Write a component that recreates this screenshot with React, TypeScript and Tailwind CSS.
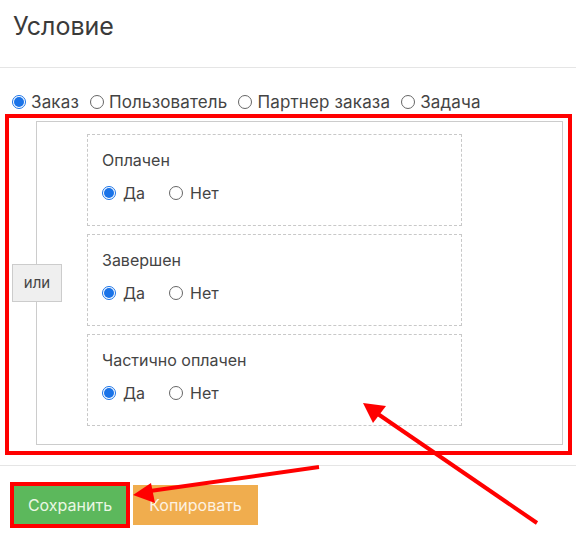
import React from "react";

const Radio = ({ checked }: { checked?: boolean }) =>
  checked ? (
    <span className="flex h-[14px] w-[14px] shrink-0 rounded-full border border-[#1a73e8] bg-white p-[1px]">
      <span className="h-full w-full rounded-full bg-[#1a73e8]" />
    </span>
  ) : (
    <span className="h-[14px] w-[14px] shrink-0 rounded-full border border-[#666] bg-white" />
  );

const Option = ({ label, checked, wide }: { label: string; checked?: boolean; wide?: boolean }) => (
  <label className={wide ? "flex items-center gap-[7px]" : "flex items-center gap-[5px]"}>
    <Radio checked={checked} />
    <span>{label}</span>
  </label>
);

const conditions = ["Оплачен", "Завершен", "Частично оплачен"];

export default function App() {
  return (
    <div
      className="relative h-[540px] w-[576px] overflow-hidden bg-white text-[15px] text-[#444]"
      style={{ fontFamily: "Inter, 'Open Sans', sans-serif" }}
    >
      {/* Header */}
      <div className="h-[68px] border-b border-[#e5e5e5] px-[13px] pt-[10px]">
        <h1 className="text-[25px] font-normal leading-[32px] text-[#3a3a3a]">Условие</h1>
      </div>

      {/* Entity type */}
      <div className="mt-[24px] flex h-[20px] items-center gap-[11px] pl-[12px] text-[17px] leading-[20px] tracking-[0.15px]">
        <Option label="Заказ" checked />
        <Option label="Пользователь" />
        <Option label="Партнер заказа" />
        <Option label="Задача" />
      </div>

      {/* Condition group (annotated) */}
      <div className="ml-[5px] mt-[2px] w-[567px] border-4 border-[#ff0000] pb-[6px] pl-[27px] pr-[5px] pt-[3px]">
        <div className="relative border border-[#cccccc] pb-[18px] pl-[50px] pt-[12px]">
          <div className="absolute left-[-25px] top-1/2 flex h-[38px] w-[50px] -translate-y-1/2 items-center justify-center border border-[#cccccc] bg-[#efefef] text-[15px] text-[#444]">
            или
          </div>
          <div className="flex w-[375px] flex-col gap-[8px]">
            {conditions.map((name) => (
              <div
                key={name}
                className="h-[92px] border border-dashed border-[#c8c8c8] px-[14px] pt-[15px] text-[16px]"
              >
                <div className="leading-[20px]">{name}</div>
                <div className="mt-[13px] flex h-[20px] items-center gap-[24px] leading-[20px]">
                  <Option label="Да" checked wide />
                  <Option label="Нет" wide />
                </div>
              </div>
            ))}
          </div>
        </div>
      </div>

      {/* Footer */}
      <div className="mt-[10px] border-t border-[#e5e5e5] pt-[16px]">
        <div className="flex items-center pl-[10px]">
          <div className="border-4 border-[#ff0000]">
            <button className="flex h-[38px] w-[112px] items-center justify-center bg-[#5cb85c] text-[16px] text-[#eaf7e4]">
              Сохранить
            </button>
          </div>
          <button className="ml-[3px] flex h-[40px] w-[125px] items-center justify-center bg-[#f0ad4e] text-[16px] text-[#fdf2e2]">
            Копировать
          </button>
        </div>
      </div>

      {/* Annotation arrows */}
      <svg className="pointer-events-none absolute left-0 top-0" width="576" height="540">
        <line x1="537" y1="523" x2="375" y2="412" stroke="#ff0000" strokeWidth="4" />
        <polygon points="363,403 386,406 373,423" fill="#ff0000" />
        <line x1="319" y1="467" x2="150" y2="491" stroke="#ff0000" strokeWidth="4" />
        <polygon points="133,495 151,483 155,503" fill="#ff0000" />
      </svg>
    </div>
  );
}
